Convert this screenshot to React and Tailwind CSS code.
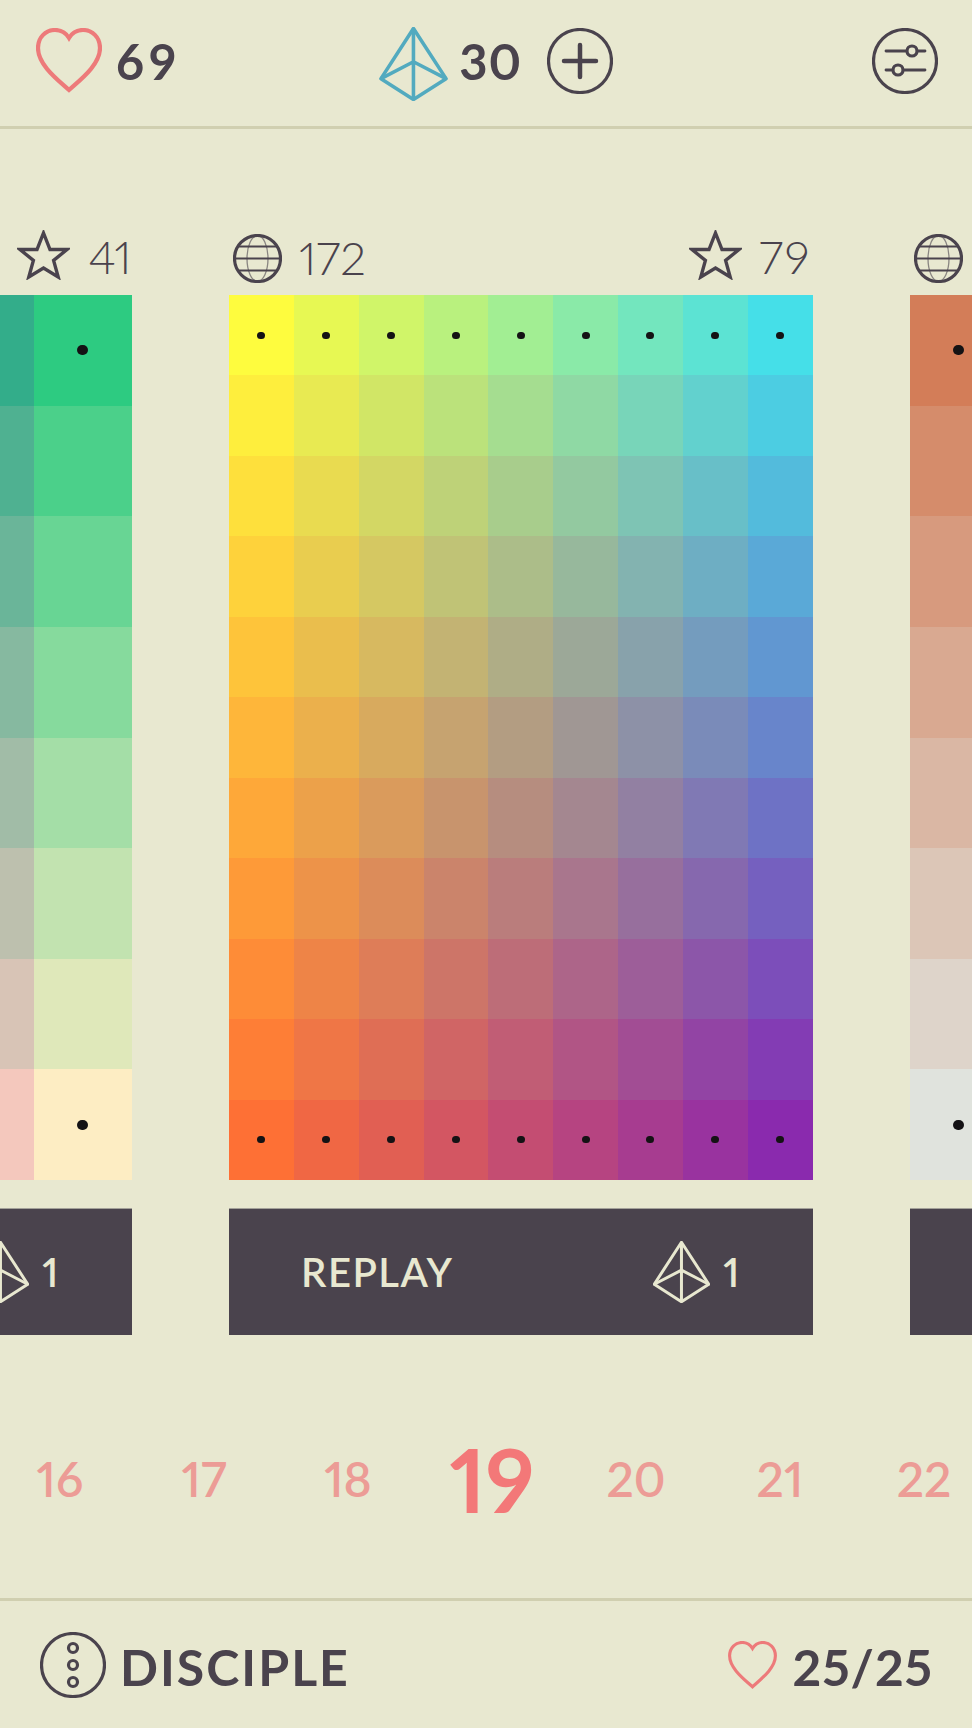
const INK = "#4a434d";

const mix = (a, b, t) => a.map((v, i) => v + (b[i] - v) * t);

const Heart = ({ className }) => (
  <svg viewBox="0 0 66 65" className={className} fill="none" stroke="#ed7a7a" strokeWidth="4.2">
    <path d="M33 62C22 52 2 37 2 20C2 9 10 2 19 2C25 2 30 5 33 10C36 5 41 2 47 2C56 2 64 9 64 20C64 37 44 52 33 62Z" />
  </svg>
);

const Pyramid = ({ className, color }) => (
  <svg viewBox="0 0 68.5 74.5" className={className} fill="none" stroke={color} strokeWidth="3.6" strokeLinejoin="round">
    <path d="M34.2 1.5L1.5 52L34.2 73L67 52Z" />
    <path d="M34.2 1.5V73M1.5 52L34.2 35L67 52" />
  </svg>
);

const Star = () => (
  <svg viewBox="0 0 53 50" className="w-[53px] h-[50px] shrink-0 mb-[3px]" fill="none" stroke={INK} strokeWidth="3.4">
    <path d="M26.5 3L33 19.5H50L36.6 30.4L41.2 47L26.5 38L11.8 47L16.4 30.4L3 19.5H20Z" />
  </svg>
);

const Globe = () => (
  <svg viewBox="0 0 49 49" className="w-[49px] h-[49px] shrink-0" fill="none" stroke={INK}>
    <ellipse cx="24.5" cy="24.5" rx="10.5" ry="23" strokeWidth="1.3" opacity="0.6" />
    <path d="M5 12.5H44M1.5 24.5H47.5M5 36.5H44" strokeWidth="2.2" />
    <circle cx="24.5" cy="24.5" r="23" strokeWidth="3.2" />
  </svg>
);

const RingIcon = ({ children }) => (
  <svg viewBox="0 0 66 66" className="w-[66px] h-[66px] shrink-0" fill="none" stroke={INK}>
    <circle cx="33" cy="33" r="31.5" strokeWidth="3.2" />
    {children}
  </svg>
);

// cells are a plain blend of the four corner colours
const Grid = ({ cols, rows, corners, gridClass, dotClass }) => {
  const cells = [];
  for (let r = 0; r < rows; r++) {
    for (let c = 0; c < cols; c++) {
      const left = mix(corners.tl, corners.bl, r / (rows - 1));
      const right = mix(corners.tr, corners.br, r / (rows - 1));
      const rgb = mix(left, right, c / (cols - 1)).map(Math.round);
      const dot = r === 0 || r === rows - 1;
      cells.push(
        <div key={`${r}-${c}`} className="flex items-center justify-center" style={{ backgroundColor: `rgb(${rgb.join(",")})` }}>
          {dot && <span className={`rounded-full bg-[#141214] ${dotClass}`} />}
        </div>
      );
    }
  }
  return <div className={`grid h-[885px] ${gridClass}`}>{cells}</div>;
};

const Board = ({ stars, starsClass, globe, globeCount, replay, cost, ...grid }) => (
  <div className="w-[583.5px] shrink-0 flex flex-col">
    <div className="h-[66px] pl-1 pr-[1px] pb-3 flex items-end justify-between text-[46px] leading-[50px] font-light text-[#4a434d]">
      <div className="flex items-center gap-[17px]">
        {globe && <Globe />}
        {globeCount && <span>{globeCount}</span>}
      </div>
      <div className="flex items-center gap-[17px]">
        {stars && (
          <>
            <Star />
            <span className={starsClass}>{stars}</span>
          </>
        )}
      </div>
    </div>
    <Grid {...grid} />
    <div className="mt-7 h-[127px] bg-[#4a434d] border-t border-[#a3a199] flex items-center pl-[72px] pr-[73px] text-[#e8e8d0] text-[40px] font-semibold">
      {replay && <span className="tracking-[1.5px]">{replay}</span>}
      {cost && (
        <div className="ml-auto flex items-center gap-[13px]">
          <Pyramid className="w-[57px] h-[62px]" color="#e8e8d0" />
          <span>{cost}</span>
        </div>
      )}
    </div>
  </div>
);

const levels = ["16", "17", "18", "19", "20", "21", "22"];

export default function App() {
  return (
    <div className="h-screen overflow-hidden bg-[#e8e8d0] flex flex-col text-[#4a434d] font-['Lato',sans-serif] proportional-nums">
      <header className="h-[129px] shrink-0 border-b-[3px] border-[#d0cfb0] pl-9 pr-[34px] pb-[5px] flex items-center">
        <Heart className="w-[66px] h-[65px]" />
        <span className="ml-[14px] text-[49px] font-bold tracking-[5px] pt-[3px]">69</span>
        <div className="ml-[198px] flex items-center">
          <Pyramid className="w-[69px] h-[74px] mt-[6px]" color="#52aabf" />
          <span className="ml-[11px] text-[49px] font-bold tracking-[1px] pt-[3px]">30</span>
          <div className="ml-[25px]">
            <RingIcon>
              <path d="M17 33H49M33 17V49" strokeWidth="4.5" strokeLinecap="round" />
            </RingIcon>
          </div>
        </div>
        <div className="ml-auto">
          <RingIcon>
            <path d="M14 23H53M14 42H53" strokeWidth="2.8" strokeLinecap="round" />
            <circle cx="40" cy="23" r="5" strokeWidth="3.2" fill="#e8e8d0" />
            <circle cx="26" cy="42" r="5" strokeWidth="3.2" fill="#e8e8d0" />
          </RingIcon>
        </div>
      </header>

      <div className="mt-[100px] ml-[-452px] flex gap-[97.5px] shrink-0">
        <Board
          stars="41"
          starsClass="-tracking-[1px] pl-[1px]"
          cost="1"
          cols={6}
          rows={8}
          gridClass="grid-cols-6 grid-rows-8"
          dotClass="w-[11px] h-[10px]"
          corners={{ tl: [75, 53, 174], tr: [45, 203, 129], bl: [208, 52, 165], br: [253, 237, 195] }}
        />
        <Board
          globe
          globeCount="172"
          stars="79"
          starsClass="tracking-[2px]"
          replay="REPLAY"
          cost="1"
          cols={9}
          rows={11}
          gridClass="grid-cols-9 grid-rows-11"
          dotClass="w-2 h-[7px]"
          corners={{ tl: [254, 252, 62], tr: [69, 223, 232], bl: [254, 112, 53], br: [138, 42, 174] }}
        />
        <Board
          globe
          cols={6}
          rows={8}
          gridClass="grid-cols-6 grid-rows-8"
          dotClass="w-[11px] h-[10px]"
          corners={{ tl: [211, 125, 88], tr: [150, 90, 140], bl: [224, 227, 221], br: [200, 200, 210] }}
        />
      </div>

      <div className="mt-[111px] -ml-3 h-[65px] flex items-center shrink-0">
        {levels.map((n) => (
          <div
            key={n}
            className={
              n === "19"
                ? "w-[144px] shrink-0 text-center text-[88px] leading-none font-bold text-[#f37878]"
                : "w-[144px] shrink-0 text-center text-[48px] leading-none font-semibold text-[#ec9c96]"
            }
          >
            {n}
          </div>
        ))}
      </div>

      <footer className="mt-auto h-[130px] shrink-0 border-t-[3px] border-[#d0cfb0] pl-10 pr-[39px] flex items-center">
        <RingIcon>
          <g strokeWidth="3.2">
            <circle cx="33" cy="16" r="4.5" />
            <circle cx="33" cy="33" r="4.5" />
            <circle cx="33" cy="50" r="4.5" />
          </g>
        </RingIcon>
        <span className="ml-[14px] pt-1 text-[50px] font-bold tracking-[2px] leading-none">DISCIPLE</span>
        <Heart className="ml-auto w-[49px] h-[48px]" />
        <span className="ml-[15px] pt-1 text-[50px] font-bold tracking-[1px] leading-none">25/25</span>
      </footer>
    </div>
  );
}
